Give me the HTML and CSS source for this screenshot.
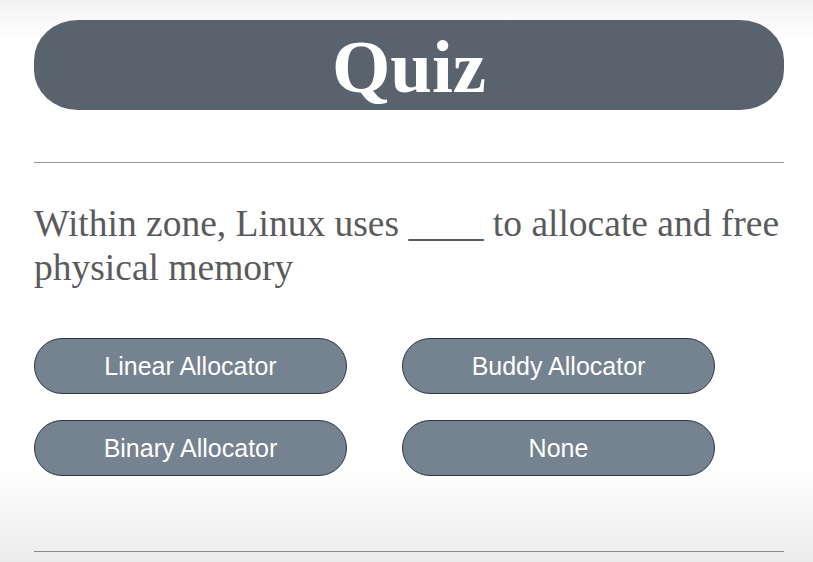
FILE: index.html
```html
<!DOCTYPE html>
<html>
<head>
<meta charset="utf-8">
<link rel="stylesheet" href="styles.css">
</head>
<body>
<div class="page">
  <header class="banner"><h1 class="title">Quiz</h1></header>
  <hr class="rule rule-top">
  <p class="question">Within zone, Linux uses ____ to allocate and free physical memory</p>
  <div class="options">
    <button class="option">Linear Allocator</button>
    <button class="option">Buddy Allocator</button>
    <button class="option">Binary Allocator</button>
    <button class="option">None</button>
  </div>
  <hr class="rule rule-bottom">
</div>
</body>
</html>
```
FILE: styles.css
```css
html, body {
  margin: 0;
  padding: 0;
  height: 100%;
}
body {
  background: linear-gradient(to bottom, #f3f3f3 0px, #ffffff 40px, #ffffff 470px, #ececec 562px);
  overflow: hidden;
}
.page {
  width: 750px;
  margin: 0 34px;
  padding-top: 20px;
}
.banner {
  height: 90px;
  background: #58636d;
  border-radius: 44px / 40px;
  display: flex;
  align-items: center;
  justify-content: center;
}
.title {
  margin: 0;
  font-family: "Liberation Serif", "Times New Roman", serif;
  font-weight: bold;
  font-size: 75px;
  color: #ffffff;
  line-height: 1;
  padding-top: 2px;
}
.rule {
  border: 0;
  height: 1px;
  margin: 0;
  background: #9a9a9a;
}
.rule-top {
  margin-top: 52px;
}
.question {
  margin: 39px 0 0;
  font-family: "Liberation Serif", "Times New Roman", serif;
  font-size: 37.5px;
  line-height: 44px;
  color: #5a5a5e;
}
.options {
  display: grid;
  grid-template-columns: 313px 313px;
  column-gap: 55px;
  row-gap: 26px;
  margin-top: 48px;
}
.option {
  height: 56px;
  background: #75828f;
  border: 1px solid #2c3848;
  border-radius: 28px;
  color: #ffffff;
  font-family: "Liberation Sans", Arial, sans-serif;
  font-size: 25px;
  padding: 0;
}
.rule-bottom {
  margin-top: 75px;
  background: #8a8a8a;
}
```
